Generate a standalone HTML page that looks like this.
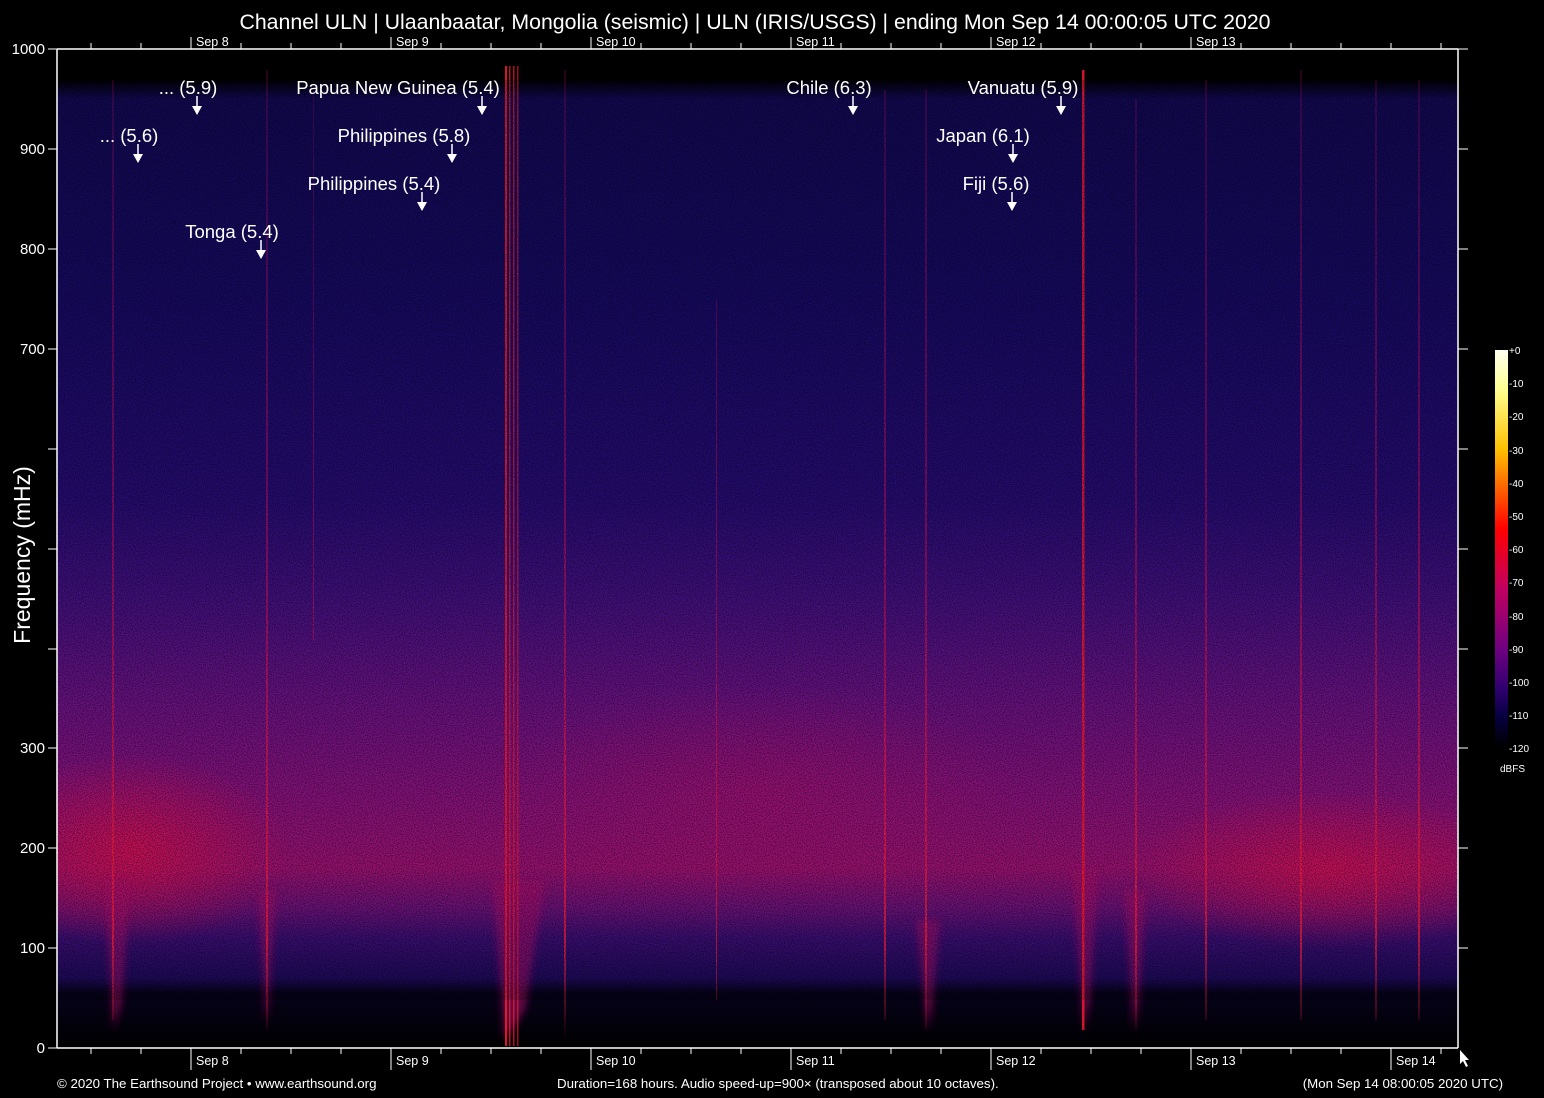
<!DOCTYPE html>
<html><head><meta charset="utf-8"><style>
html,body{margin:0;padding:0;background:#000;}
svg{display:block;font-family:"Liberation Sans",sans-serif;}
</style></head><body>
<svg width="1544" height="1098" viewBox="0 0 1544 1098" xmlns="http://www.w3.org/2000/svg">
<defs>
<linearGradient id="vg" x1="0" y1="49" x2="0" y2="1048" gradientUnits="userSpaceOnUse">
<stop offset="0" stop-color="#000"/>
<stop offset="0.03" stop-color="#000"/>
<stop offset="0.05" stop-color="#120952"/>
<stop offset="0.25" stop-color="#170a62"/>
<stop offset="0.45" stop-color="#260c72"/>
<stop offset="0.55" stop-color="#42107e"/>
<stop offset="0.65" stop-color="#681282"/>
<stop offset="0.75" stop-color="#88127c"/>
<stop offset="0.82" stop-color="#9a1272"/>
<stop offset="0.86" stop-color="#6a1278"/>
<stop offset="0.89" stop-color="#3a0e72"/>
<stop offset="0.93" stop-color="#1e0a5a"/>
<stop offset="0.945" stop-color="#06021a"/>
<stop offset="1" stop-color="#000"/>
</linearGradient>
<radialGradient id="rl" cx="130" cy="850" r="160" gradientUnits="userSpaceOnUse" gradientTransform="translate(130 850) scale(1 0.6) translate(-130 -850)">
<stop offset="0" stop-color="#d81050" stop-opacity="0.8"/><stop offset="1" stop-color="#d81050" stop-opacity="0"/></radialGradient>
<radialGradient id="rr" cx="1330" cy="870" r="200" gradientUnits="userSpaceOnUse" gradientTransform="translate(1330 870) scale(1 0.4) translate(-1330 -870)">
<stop offset="0" stop-color="#d81050" stop-opacity="0.75"/><stop offset="1" stop-color="#d81050" stop-opacity="0"/></radialGradient>
<radialGradient id="rm" cx="760" cy="790" r="260" gradientUnits="userSpaceOnUse" gradientTransform="translate(760 790) scale(1 0.4) translate(-760 -790)">
<stop offset="0" stop-color="#b0106a" stop-opacity="0.45"/><stop offset="1" stop-color="#b0106a" stop-opacity="0"/></radialGradient>
<linearGradient id="cb" x1="0" y1="350" x2="0" y2="748" gradientUnits="userSpaceOnUse">
<stop offset="0" stop-color="#fffff0"/>
<stop offset="0.1" stop-color="#ffff90"/>
<stop offset="0.25" stop-color="#ffc000"/>
<stop offset="0.35" stop-color="#ff6000"/>
<stop offset="0.45" stop-color="#ff0000"/>
<stop offset="0.6" stop-color="#c00060"/>
<stop offset="0.75" stop-color="#700080"/>
<stop offset="0.85" stop-color="#300070"/>
<stop offset="0.92" stop-color="#060040"/>
<stop offset="1" stop-color="#000"/>
</linearGradient>
<filter id="nz" x="0" y="0" width="100%" height="100%">
<feTurbulence type="fractalNoise" baseFrequency="0.9" numOctaves="1" seed="3"/>
<feColorMatrix type="matrix" values="0 0 0 0 0  0 0 0 0 0  0 0 0 0 0  0 0 0 -2.5 1.6"/>
</filter>
<filter id="bl"><feGaussianBlur stdDeviation="4"/></filter>
<linearGradient id="ln" x1="0" y1="60" x2="0" y2="1040" gradientUnits="userSpaceOnUse">
<stop offset="0" stop-color="#c01070" stop-opacity="0.2"/>
<stop offset="0.5" stop-color="#d01060" stop-opacity="0.55"/>
<stop offset="0.9" stop-color="#ff2040" stop-opacity="0.75"/>
<stop offset="1" stop-color="#ff2040" stop-opacity="0"/>
</linearGradient>
</defs>

<rect x="57" y="49" width="1401" height="999" fill="url(#vg)"/>
<rect x="57" y="680" width="400" height="350" fill="url(#rl)"/>
<rect x="1050" y="720" width="408" height="300" fill="url(#rr)"/>
<rect x="400" y="650" width="700" height="300" fill="url(#rm)"/>
<g fill="#b0106a" opacity="0.55" filter="url(#bl)">
<polygon points="104,880 130,880 122,1000 114,1030"/>
<polygon points="258,890 276,890 269,1000 266,1025"/>
<polygon points="916,920 940,920 932,1010 928,1030"/>
<polygon points="1072,870 1098,870 1090,1000 1084,1030"/>
<polygon points="1124,890 1146,890 1139,1000 1134,1030"/>
<polygon points="492,880 545,880 525,1010 505,1040"/>
</g>
<g fill="url(#ln)">
<rect x="112" y="80" width="2" height="940"/>
<rect x="266" y="70" width="2" height="960"/>
<rect x="313" y="90" width="1" height="550"/>
<rect x="564" y="70" width="2" height="970"/>
<rect x="716" y="300" width="1" height="700"/>
<rect x="884" y="90" width="2" height="930"/>
<rect x="925" y="90" width="2" height="940"/>
<rect x="1135" y="100" width="2" height="930"/>
<rect x="1205" y="80" width="2" height="940"/>
<rect x="1300" y="70" width="2" height="950"/>
<rect x="1375" y="80" width="2" height="940"/>
<rect x="1418" y="80" width="2" height="940"/>
</g>
<g fill="#ff1a30">
<rect x="505" y="66" width="2" height="980" opacity="0.85"/>
<rect x="509" y="66" width="1.5" height="980" opacity="0.7"/>
<rect x="513" y="66" width="1.5" height="980" opacity="0.7"/>
<rect x="517" y="66" width="1.5" height="980" opacity="0.6"/>
<rect x="1082" y="70" width="2.5" height="960" opacity="0.8"/>
</g>
<rect x="57" y="80" width="1401" height="920" filter="url(#nz)" opacity="0.5"/>

<g stroke="#fff" stroke-width="1.5" fill="none">
<line x1="57" y1="49" x2="1458" y2="49"/>
<line x1="57" y1="1048" x2="1458" y2="1048"/>
<line x1="57" y1="49" x2="57" y2="1048"/>
<line x1="1458" y1="49" x2="1458" y2="1048"/>
</g>
<g stroke="#fff" stroke-width="1">
<path d="M91 43V49M141 43V49M241 43V49M291 43V49M341 43V49M441 43V49M491 43V49M541 43V49M641 43V49M691 43V49M741 43V49M841 43V49M891 43V49M941 43V49M1041 43V49M1091 43V49M1141 43V49M1241 43V49M1291 43V49M1341 43V49M1391 43V49M1441 43V49"/>
<path d="M191 37V49M391 37V49M591 37V49M791 37V49M991 37V49M1191 37V49"/>
<path d="M91 1048V1054M141 1048V1054M241 1048V1054M291 1048V1054M341 1048V1054M441 1048V1054M491 1048V1054M541 1048V1054M641 1048V1054M691 1048V1054M741 1048V1054M841 1048V1054M891 1048V1054M941 1048V1054M1041 1048V1054M1091 1048V1054M1141 1048V1054M1241 1048V1054M1291 1048V1054M1341 1048V1054M1441 1048V1054"/>
<path d="M191 1048V1070M391 1048V1070M591 1048V1070M791 1048V1070M991 1048V1070M1191 1048V1070M1391 1048V1070"/>
<path d="M48 49H57M48 149H57M48 249H57M48 349H57M48 449H57M48 549H57M48 649H57M48 748H57M48 848H57M48 948H57M48 1048H57"/>
<path d="M1458 49H1468M1458 149H1468M1458 249H1468M1458 349H1468M1458 449H1468M1458 549H1468M1458 649H1468M1458 748H1468M1458 848H1468M1458 948H1468"/>
</g>

<g fill="#fff" font-size="12.5">
<text x="196" y="46">Sep  8</text><text x="396" y="46">Sep  9</text><text x="596" y="46">Sep 10</text>
<text x="796" y="46">Sep 11</text><text x="996" y="46">Sep 12</text><text x="1196" y="46">Sep 13</text>
<text x="196" y="1065">Sep  8</text><text x="396" y="1065">Sep  9</text><text x="596" y="1065">Sep 10</text>
<text x="796" y="1065">Sep 11</text><text x="996" y="1065">Sep 12</text><text x="1196" y="1065">Sep 13</text><text x="1396" y="1065">Sep 14</text>
</g>
<g fill="#fff" font-size="15" text-anchor="end">
<text x="45" y="54">1000</text><text x="45" y="154">900</text><text x="45" y="254">800</text><text x="45" y="354">700</text>
<text x="45" y="753">300</text><text x="45" y="853">200</text><text x="45" y="953">100</text><text x="45" y="1053">0</text>
</g>
<text x="30" y="555" fill="#fff" font-size="23" text-anchor="middle" transform="rotate(-90 30 555)">Frequency (mHz)</text>
<text x="755" y="29" fill="#fff" font-size="21.3" text-anchor="middle">Channel ULN | Ulaanbaatar, Mongolia (seismic) | ULN (IRIS/USGS) | ending Mon Sep 14 00:00:05 UTC 2020</text>

<g fill="#fff" font-size="18.5" text-anchor="middle">
<text x="188" y="94">... (5.9)</text>
<text x="129" y="142">... (5.6)</text>
<text x="232" y="238">Tonga (5.4)</text>
<text x="398" y="94">Papua New Guinea (5.4)</text>
<text x="404" y="142">Philippines (5.8)</text>
<text x="374" y="190">Philippines (5.4)</text>
<text x="829" y="94">Chile (6.3)</text>
<text x="1023" y="94">Vanuatu (5.9)</text>
<text x="983" y="142">Japan (6.1)</text>
<text x="996" y="190">Fiji (5.6)</text>
</g>
<g stroke="#fff" stroke-width="1.5">
<path d="M197 96V108M138 144V156M261 240V252M482 96V108M452 144V156M422 192V204M853 96V108M1061 96V108M1013 144V156M1012 192V204"/>
</g>
<g fill="#fff">
<path d="M192 106h10l-5 9z"/><path d="M133 154h10l-5 9z"/><path d="M256 250h10l-5 9z"/>
<path d="M477 106h10l-5 9z"/><path d="M447 154h10l-5 9z"/><path d="M417 202h10l-5 9z"/>
<path d="M848 106h10l-5 9z"/><path d="M1056 106h10l-5 9z"/><path d="M1008 154h10l-5 9z"/><path d="M1007 202h10l-5 9z"/>
</g>

<rect x="1495" y="350" width="13" height="398" fill="url(#cb)"/>
<g fill="#fff" font-size="10">
<text x="1509" y="354">+0</text><text x="1509" y="387">-10</text><text x="1509" y="420">-20</text><text x="1509" y="454">-30</text>
<text x="1509" y="487">-40</text><text x="1509" y="520">-50</text><text x="1509" y="553">-60</text><text x="1509" y="586">-70</text>
<text x="1509" y="620">-80</text><text x="1509" y="653">-90</text><text x="1509" y="686">-100</text><text x="1509" y="719">-110</text>
<text x="1509" y="752">-120</text><text x="1500" y="772">dBFS</text>
</g>

<path d="M1460 1050v14l3-3 3 6 2-1-3-6h4z" fill="#fff"/>

<g fill="#fff" font-size="13.3">
<text x="57" y="1088">© 2020 The Earthsound Project • www.earthsound.org</text>
<text x="557" y="1088">Duration=168 hours. Audio speed-up=900× (transposed about 10 octaves).</text>
<text x="1503" y="1088" text-anchor="end">(Mon Sep 14 08:00:05 2020 UTC)</text>
</g>
</svg>
</body></html>
